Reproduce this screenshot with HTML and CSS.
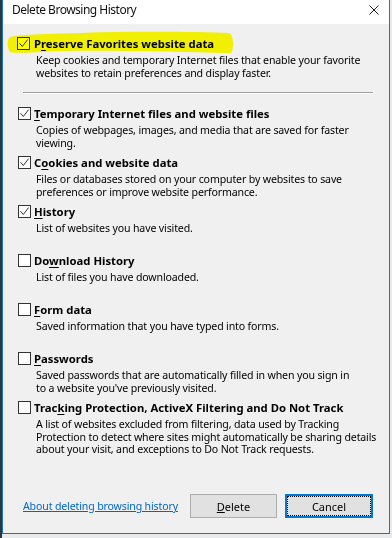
FILE: index.html
```html
<!DOCTYPE html>
<html lang="en">

<head>
    <meta charset="UTF-8">
    <meta name="viewport" content="width=device-width, initial-scale=1.0">
    <title>Delete Browsing History</title>
    <link rel="stylesheet" href="styles.css">
</head>

<body>
    <div class="window">
        <div class="titlebar">
            <span class="title">Delete Browsing History</span>
            <svg class="close" width="10" height="10" viewBox="0 0 10 10">
                <path d="M0.5 0.5 L9.5 9.5 M9.5 0.5 L0.5 9.5" stroke="#1a1a1a" stroke-width="1" fill="none" />
            </svg>
        </div>

        <div class="content">
            <div class="option top">
                <div class="head">
                    <span class="box"><svg class="tick" viewBox="0 0 11 11"><path d="M1.5 5.2 L4.3 8.5 L9.6 1.6" /></svg></span>
                    <span class="label">P<u>r</u>eserve Favorites website data</span>
                </div>
                <p class="desc">Keep cookies and temporary Internet files that enable your favorite<br>websites to retain preferences and display faster.</p>
            </div>

            <div class="separator"></div>

            <div class="options">
                <div class="option">
                    <div class="head">
                        <span class="box"><svg class="tick" viewBox="0 0 11 11"><path d="M1.5 5.2 L4.3 8.5 L9.6 1.6" /></svg></span>
                        <span class="label"><u>T</u>emporary Internet files and website files</span>
                    </div>
                    <p class="desc">Copies of webpages, images, and media that are saved for faster<br>viewing.</p>
                </div>
                <div class="option">
                    <div class="head">
                        <span class="box"><svg class="tick" viewBox="0 0 11 11"><path d="M1.5 5.2 L4.3 8.5 L9.6 1.6" /></svg></span>
                        <span class="label">C<u>o</u>okies and website data</span>
                    </div>
                    <p class="desc">Files or databases stored on your computer by websites to save<br>preferences or improve website performance.</p>
                </div>
                <div class="option">
                    <div class="head">
                        <span class="box"><svg class="tick" viewBox="0 0 11 11"><path d="M1.5 5.2 L4.3 8.5 L9.6 1.6" /></svg></span>
                        <span class="label"><u>H</u>istory</span>
                    </div>
                    <p class="desc">List of websites you have visited.</p>
                </div>
                <div class="option">
                    <div class="head">
                        <span class="box"></span>
                        <span class="label">Do<u>w</u>nload History</span>
                    </div>
                    <p class="desc">List of files you have downloaded.</p>
                </div>
                <div class="option">
                    <div class="head">
                        <span class="box"></span>
                        <span class="label"><u>F</u>orm data</span>
                    </div>
                    <p class="desc">Saved information that you have typed into forms.</p>
                </div>
                <div class="option">
                    <div class="head">
                        <span class="box"></span>
                        <span class="label"><u>P</u>asswords</span>
                    </div>
                    <p class="desc">Saved passwords that are automatically filled in when you sign in<br>to a website you've previously visited.</p>
                </div>
                <div class="option">
                    <div class="head">
                        <span class="box"></span>
                        <span class="label">Trac<u>k</u>ing Protection, ActiveX Filtering and Do Not Track</span>
                    </div>
                    <p class="desc">A list of websites excluded from filtering, data used by Tracking<br>Protection to detect where sites might automatically be sharing details<br>about your visit, and exceptions to Do Not Track requests.</p>
                </div>
            </div>

            <div class="footer">
                <a class="help" href="#">About deleting browsing history</a>
                <button class="btn delete" type="button"><u>D</u>elete</button>
                <button class="btn focused" type="button">Cancel</button>
            </div>
        </div>

        <!-- highlighter stroke drawn over the first option -->
        <svg class="marker" width="392" height="60" viewBox="0 0 392 60">
            <path d="M9 38 C10 35 40 34 80 33 C140 31 200 32 229 33 C234 34 234 50 231 53 C180 52 120 50 60 51 C35 52 15 54 10 52 C7 48 7 41 9 38 Z" fill="#ffff00" />
        </svg>
    </div>
</body>

</html>
```

FILE: styles.css
```css
html,
body {
    margin: 0;
    height: 538px;
    overflow: hidden;
}

body {
    background: linear-gradient(to right, #2d3540 2px, #e9eaec 2px);
    font-family: "Noto Sans", "Open Sans", sans-serif;
    color: #000;
}

.window {
    position: relative;
    margin-left: 2px;
    width: 386px;
    height: 533px;
    border: 1px solid #1c74c5;
    border-top: 0;
    background: #f0f0f0;
    display: flex;
    flex-direction: column;
}

.titlebar {
    height: 24px;
    flex: none;
    background: #fff;
    display: flex;
    align-items: flex-start;
    padding-left: 9px;
}

.title {
    font-size: 12px;
    letter-spacing: -0.5px;
    line-height: 20px;
    color: #111;
}

.close {
    margin-left: auto;
    margin-right: 10px;
    margin-top: 5px;
}

.content {
    flex: 1;
    display: flex;
    flex-direction: column;
    padding: 0 16px 15px 0;
}

.option {
    padding-left: 15px;
    height: 49px;
}

.option.top {
    margin-top: 13px;
    padding-left: 14px;
    height: auto;
}

.head {
    display: flex;
    align-items: center;
    height: 13px;
}

.box {
    flex: none;
    display: flex;
    width: 11px;
    height: 11px;
    border: 1px solid #333;
    background: #fff;
    margin-right: 3px;
}

.option.top .box {
    margin-right: 4px;
}

.tick {
    width: 11px;
    height: 11px;
    fill: none;
    stroke: #333;
    stroke-width: 1;
}

.label {
    font-weight: bold;
    font-size: 11.3px;
    line-height: 13px;
    white-space: nowrap;
}

.label u {
    text-underline-offset: 2px;
}

.desc {
    margin: 4px 0 0 18px;
    font-size: 10.6px;
    letter-spacing: -0.15px;
    line-height: 12.5px;
    white-space: nowrap;
}

.option.top .desc {
    margin-left: 19px;
    margin-top: 4px;
}

.separator {
    margin: 13px 0 13px 20px;
    width: 350px;
    height: 1px;
    background: #a0a0a0;
    border-bottom: 1px solid #fff;
}

.footer {
    margin-top: auto;
    display: flex;
    align-items: center;
    padding-left: 20px;
}

.help {
    font-size: 10.6px;
    letter-spacing: -0.15px;
    color: #0066cc;
    text-decoration: underline;
    white-space: nowrap;
    margin-right: auto;
}

.btn {
    position: relative;
    width: 88px;
    height: 24px;
    margin-left: 8px;
    padding: 0;
    background: #e1e1e1;
    border: 1px solid #adadad;
    font-family: inherit;
    font-size: 11px;
    color: #000;
}

.btn.delete {
    width: 87px;
}

.btn.focused {
    border-color: #0078d7;
    box-shadow: inset 0 0 0 1px #0078d7;
}

.btn.focused::after {
    content: "";
    position: absolute;
    inset: 1px;
    border: 1px dotted #000;
}

.marker {
    position: absolute;
    left: -3px;
    top: 0;
    mix-blend-mode: multiply;
    pointer-events: none;
}
```
